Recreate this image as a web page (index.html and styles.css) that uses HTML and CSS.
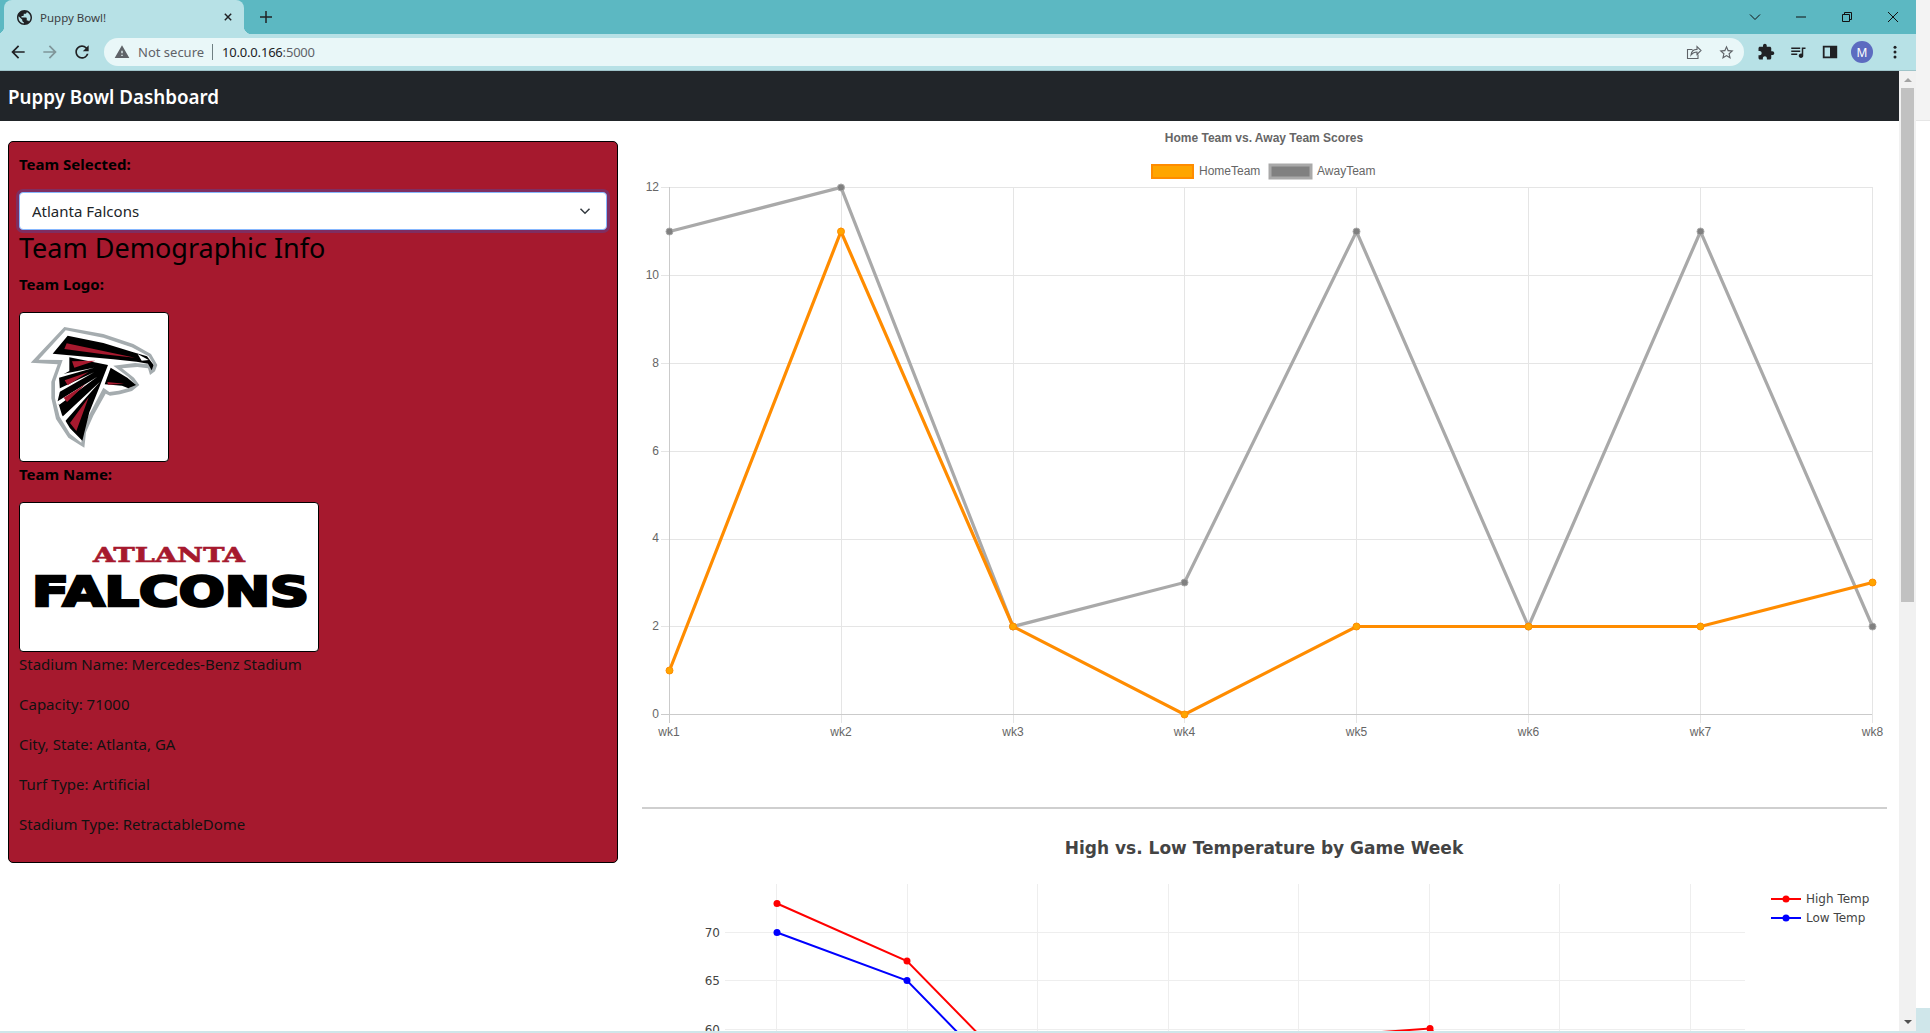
FILE: index.html
```html
<!DOCTYPE html>
<html lang="en">
<head>
    <meta charset="UTF-8">
    <title>Puppy Bowl!</title>
    <link rel="stylesheet" href="styles.css">
</head>
<body>
<div class="desktop">
    <div class="window">
        <!-- browser tabs -->
        <div class="tabstrip">
            <div class="tab">
                <svg class="favicon" viewBox="2 2 20 20"><path d="M12 2C6.48 2 2 6.48 2 12s4.48 10 10 10 10-4.48 10-10S17.52 2 12 2zm-1 17.93c-3.95-.49-7-3.85-7-7.93 0-.62.08-1.21.21-1.79L9 15v1c0 1.1.9 2 2 2v1.93zm6.9-2.54c-.26-.81-1-1.39-1.9-1.39h-1v-3c0-.55-.45-1-1-1H8v-2h2c.55 0 1-.45 1-1V7h2c1.1 0 2-.9 2-2v-.41c2.93 1.19 5 4.06 5 7.41 0 2.08-.8 3.97-2.1 5.39z"/></svg>
                <span class="tab-title">Puppy Bowl!</span>
                <svg class="tab-close" viewBox="0 0 10 10"><path d="M1 1l8 8M9 1l-8 8"/></svg>
            </div>
            <svg class="new-tab" viewBox="0 0 12 12"><path d="M6 0v12M0 6h12"/></svg>
            <div class="win-controls">
                <svg class="win-icon" viewBox="0 0 12 12"><path d="M1 3.5l5 5 5-5"/></svg>
                <svg class="win-icon" viewBox="0 0 12 12"><path d="M1 6h10"/></svg>
                <svg class="win-icon" viewBox="0 0 12 12"><path d="M1.5 3.5h7v7h-7zM3.5 3.5V1.5h7v7h-2"/></svg>
                <svg class="win-icon" viewBox="0 0 12 12"><path d="M1 1l10 10M11 1L1 11"/></svg>
            </div>
        </div>

        <!-- toolbar and address bar -->
        <div class="toolbar">
            <svg class="nav-icon" viewBox="0 0 24 24"><path d="M20 11H7.83l5.59-5.59L12 4l-8 8 8 8 1.41-1.41L7.83 13H20v-2z"/></svg>
            <svg class="nav-icon nav-disabled" viewBox="0 0 24 24"><path d="M4 11h12.17l-5.59-5.59L12 4l8 8-8 8-1.41-1.41L16.17 13H4v-2z"/></svg>
            <svg class="nav-icon" viewBox="0 0 24 24"><path d="M17.65 6.35A7.958 7.958 0 0 0 12 4c-4.42 0-7.99 3.58-7.99 8s3.57 8 7.99 8c3.73 0 6.84-2.55 7.73-6h-2.08A5.99 5.99 0 0 1 12 18c-3.31 0-6-2.69-6-6s2.69-6 6-6c1.66 0 3.14.69 4.22 1.78L13 11h7V4l-2.35 2.35z"/></svg>
            <div class="omnibox">
                <svg class="warn-icon" viewBox="0 0 24 24"><path d="M1 21h22L12 2 1 21zm12-3h-2v-2h2v2zm0-4h-2v-4h2v4z"/></svg>
                <span class="not-secure">Not secure</span>
                <span class="omni-sep"></span>
                <span class="url">10.0.0.166<span class="url-port">:5000</span></span>
                <svg class="share-icon" viewBox="0 0 16 16"><path d="M12 10.5v4H1.5V5.5h5M5 11c.4-3.5 2.8-5.6 6-5.6V2.5l4 4-4 4V8C8.7 8 6.5 9 5 11z"/></svg>
                <svg class="star-icon" viewBox="0 0 24 24"><path d="M22 9.24l-7.19-.62L12 2 9.19 8.63 2 9.24l5.46 4.73L5.82 21 12 17.27 18.18 21l-1.63-7.03L22 9.24zM12 15.4l-3.76 2.27 1-4.28-3.32-2.88 4.38-.38L12 6.1l1.71 4.04 4.38.38-3.32 2.88 1 4.28L12 15.4z"/></svg>
            </div>
            <div class="tool-icons">
                <svg class="tool-icon" viewBox="0 0 24 24"><path d="M20.5 11H19V7c0-1.1-.9-2-2-2h-4V3.5C13 2.12 11.88 1 10.5 1S8 2.12 8 3.5V5H4c-1.1 0-1.99.9-1.99 2v3.8H3.5c1.49 0 2.7 1.21 2.7 2.7s-1.21 2.7-2.7 2.7H2V20c0 1.1.9 2 2 2h3.8v-1.5c0-1.49 1.21-2.7 2.7-2.7 1.49 0 2.7 1.21 2.7 2.7V22H17c1.1 0 2-.9 2-2v-4h1.5c1.38 0 2.5-1.12 2.5-2.5S21.88 11 20.5 11z"/></svg>
                <svg class="tool-icon" viewBox="0 0 24 24"><path d="M15 6H3v2h12V6zm0 4H3v2h12v-2zM3 16h8v-2H3v2zM17 6v8.18c-.31-.11-.65-.18-1-.18-1.66 0-3 1.34-3 3s1.34 3 3 3 3-1.34 3-3V8h3V6h-5z"/></svg>
                <svg class="tool-icon" viewBox="0 0 20 20"><path fill-rule="evenodd" d="M2 3h16v14H2zM4 5v10h6V5z"/></svg>
                <span class="avatar">M</span>
                <svg class="tool-icon" viewBox="0 0 24 24"><circle cx="12" cy="5.5" r="2"/><circle cx="12" cy="12" r="2"/><circle cx="12" cy="18.5" r="2"/></svg>
            </div>
        </div>

        <div class="viewport">
            <div class="page">
                <nav class="navbar">Puppy Bowl Dashboard</nav>
                <div class="dashboard">
                    <div class="side-col">
                        <section class="team-panel">
                            <p class="label">Team Selected:</p>
                            <div class="select-wrap">
                                <select class="team-select">
                                    <option>Atlanta Falcons</option>
                                </select>
                                <svg class="select-arrow" viewBox="0 0 16 16"><path d="M2 5l6 6 6-6"/></svg>
                            </div>
                            <h3 class="panel-title">Team Demographic Info</h3>
                            <p class="label">Team Logo:</p>
                            <div class="logo-box logo-square">
                                <svg class="logo-svg" viewBox="0 -6 444 444">
                                    <path class="f-gray" d="M133 36L250 57 340 87 393 117 412 150 405 169 390 180 384 160 352 156 306 160 342 188 358 210 336 228 300 238 270 242 257 236 220 302 198 352 193 398 145 368 108 312 94 250 94 200 113 148 32 143z"/>
                                    <path class="f-white" d="M137 46L250 68 335 97 386 124 402 150 396 160 388 148 345 144 280 152 325 186 345 208 330 218 296 227 268 231 250 218 207 300 187 350 184 383 150 356 119 305 105 250 105 200 128 135 56 134z"/>
                                    <path class="f-black" d="M143 62L250 84 340 112 381 124 401 150 395 166 384 146 350 140 280 133 98 116z"/>
                                    <path class="f-red" d="M140 85L345 128 250 118 133 102z"/>
                                    <path class="f-white" d="M353 117L386 135 365 137z"/>
                                    <path class="f-black" d="M148 127L264 150 236 222 208 292 187 377 150 340 126 300 113 258 120 228 117 185 148 168z"/>
                                    <path class="f-white" d="M113 180L222 158 117 188zM110 224L222 172 117 232zM108 262L232 185 118 269zM124 308L240 200 134 320z"/>
                                    <path class="f-red" d="M156 139L226 137 163 158zM134 196L206 171 143 211zM131 248L197 207 141 261zM150 324L206 247 169 348z"/>
                                    <path class="f-black" d="M272 158L322 188 348 210 325 220 306 212 254 208z"/>
                                    <path class="f-red" d="M262 201L312 206 264 209z"/>
                                </svg>
                            </div>
                            <p class="label">Team Name:</p>
                            <div class="logo-box logo-wide">
                                <svg class="logo-svg" viewBox="0 0 298 148">
                                    <text class="word-atlanta" x="73" y="59" textLength="152" lengthAdjust="spacingAndGlyphs">ATLANTA</text>
                                    <text class="word-falcons" x="12" y="103" textLength="277" lengthAdjust="spacingAndGlyphs">FALCONS</text>
                                </svg>
                            </div>
                            <p class="info">Stadium Name: Mercedes-Benz Stadium</p>
                            <p class="info">Capacity: 71000</p>
                            <p class="info">City, State: Atlanta, GA</p>
                            <p class="info">Turf Type: Artificial</p>
                            <p class="info">Stadium Type: RetractableDome</p>
                        </section>
                    </div>

                    <div class="chart-col">
                        <!-- scores chart, viewBox uses the same numbers as the page -->
                        <svg class="chart chart-scores" viewBox="642 121 1245 680">
                            <text class="c1-title" x="1264" y="142">Home Team vs. Away Team Scores</text>
                            <rect class="swatch-home" x="1152" y="165" width="41" height="13"/>
                            <text class="c1-text" x="1199" y="175">HomeTeam</text>
                            <rect class="swatch-away" x="1270" y="165" width="41" height="13"/>
                            <text class="c1-text" x="1317" y="175">AwayTeam</text>

                            <path class="c1-grid" d="M661 187.5H1872M661 275.5H1872M661 363.5H1872M661 451.5H1872M661 539.5H1872M661 626.5H1872"/>
                            <path class="c1-grid" d="M841.5 187V723M1013.5 187V723M1184.5 187V723M1356.5 187V723M1528.5 187V723M1700.5 187V723M1872.5 187V723"/>
                            <path class="c1-axis" d="M669.5 187V723M661 714.5H1872"/>

                            <text class="c1-ytick" x="659" y="191">12</text>
                            <text class="c1-ytick" x="659" y="279">10</text>
                            <text class="c1-ytick" x="659" y="367">8</text>
                            <text class="c1-ytick" x="659" y="455">6</text>
                            <text class="c1-ytick" x="659" y="542">4</text>
                            <text class="c1-ytick" x="659" y="630">2</text>
                            <text class="c1-ytick" x="659" y="718">0</text>

                            <text class="c1-xtick" x="669" y="736">wk1</text>
                            <text class="c1-xtick" x="841" y="736">wk2</text>
                            <text class="c1-xtick" x="1013" y="736">wk3</text>
                            <text class="c1-xtick" x="1184.5" y="736">wk4</text>
                            <text class="c1-xtick" x="1356.5" y="736">wk5</text>
                            <text class="c1-xtick" x="1528.5" y="736">wk6</text>
                            <text class="c1-xtick" x="1700.5" y="736">wk7</text>
                            <text class="c1-xtick" x="1872.5" y="736">wk8</text>

                            <polyline class="line-away" points="669.5,231.5 841,187.5 1013,626.5 1184.5,582.5 1356.5,231.5 1528.5,626.5 1700.5,231.5 1872.5,626.5"/>
                            <g class="dots-away">
                                <circle cx="669.5" cy="231.5" r="3.5"/><circle cx="841" cy="187.5" r="3.5"/><circle cx="1013" cy="626.5" r="3.5"/><circle cx="1184.5" cy="582.5" r="3.5"/><circle cx="1356.5" cy="231.5" r="3.5"/><circle cx="1528.5" cy="626.5" r="3.5"/><circle cx="1700.5" cy="231.5" r="3.5"/><circle cx="1872.5" cy="626.5" r="3.5"/>
                            </g>
                            <polyline class="line-home" points="669.5,670.5 841,231.5 1013,626.5 1184.5,714.5 1356.5,626.5 1528.5,626.5 1700.5,626.5 1872.5,582.5"/>
                            <g class="dots-home">
                                <circle cx="669.5" cy="670.5" r="3.5"/><circle cx="841" cy="231.5" r="3.5"/><circle cx="1013" cy="626.5" r="3.5"/><circle cx="1184.5" cy="714.5" r="3.5"/><circle cx="1356.5" cy="626.5" r="3.5"/><circle cx="1528.5" cy="626.5" r="3.5"/><circle cx="1700.5" cy="626.5" r="3.5"/><circle cx="1872.5" cy="582.5" r="3.5"/>
                            </g>
                        </svg>

                        <hr class="chart-rule">

                        <!-- temperature chart, runs past the fold -->
                        <svg class="chart chart-temps" viewBox="642 809 1245 420">
                            <text class="c2-title" x="1264" y="854">High vs. Low Temperature by Game Week</text>
                            <path class="c2-grid" d="M776.5 884V1200M907.5 884V1200M1037.5 884V1200M1168.5 884V1200M1298.5 884V1200M1429.5 884V1200M1559.5 884V1200M1690.5 884V1200"/>
                            <path class="c2-grid" d="M725 932.5H1745M725 980.5H1745M725 1029.5H1745"/>
                            <text class="c2-ytick" x="720" y="937">70</text>
                            <text class="c2-ytick" x="720" y="985">65</text>
                            <text class="c2-ytick" x="720" y="1034">60</text>

                            <polyline class="line-high" points="777,903.5 907,961 1038,1095 1168,1100 1299,1038 1430,1028.5 1560,1150"/>
                            <g class="dots-high">
                                <circle cx="777" cy="903.5" r="3.5"/><circle cx="907" cy="961" r="3.5"/><circle cx="1430" cy="1028.5" r="3.5"/>
                            </g>
                            <polyline class="line-low" points="777,932.5 907,980.5 1038,1115 1168,1130 1299,1100 1430,1080"/>
                            <g class="dots-low">
                                <circle cx="777" cy="932.5" r="3.5"/><circle cx="907" cy="980.5" r="3.5"/>
                            </g>

                            <path class="line-high" d="M1771 899H1801"/>
                            <circle class="legend-high" cx="1786" cy="899" r="3.5"/>
                            <text class="c2-text" x="1806" y="903">High Temp</text>
                            <path class="line-low" d="M1771 918H1801"/>
                            <circle class="legend-low" cx="1786" cy="918" r="3.5"/>
                            <text class="c2-text" x="1806" y="922">Low Temp</text>
                        </svg>
                    </div>
                </div>
            </div>

            <div class="scrollbar">
                <span class="scroll-up"></span>
                <span class="scroll-thumb"></span>
                <span class="scroll-down"></span>
            </div>
        </div>
    </div>

    <div class="edge">
        <div class="edge-top"></div>
        <div class="edge-mid"></div>
        <div class="edge-bottom"></div>
    </div>
</div>
<div class="taskbar-line"></div>
</body>
</html>
```

FILE: styles.css
```css
html, body {
    margin: 0;
    padding: 0;
    height: 100%;
    overflow: hidden;
    background: #fff;
    font-family: "Noto Sans", "Open Sans", sans-serif;
}
.desktop {
    display: flex;
    height: 1031px;
}
.window {
    width: 1916px;
    display: flex;
    flex-direction: column;
}
.edge {
    flex: 1;
    display: flex;
    flex-direction: column;
}
.edge-top {
    height: 120px;
    background: #f3f3f3;
    border-bottom: 1px solid #e6e6e6;
}
.edge-mid {
    flex: 1;
    background: #fff;
}
.edge-bottom {
    height: 23px;
    background: #cfe6ea;
}
.taskbar-line {
    height: 2px;
    background: #cfe6ea;
}

/* tab strip */
.tabstrip {
    height: 34px;
    flex: none;
    background: #5cb8c2;
    display: flex;
    align-items: flex-end;
}
.tab {
    position: relative;
    width: 240px;
    height: 34px;
    margin-left: 4px;
    box-sizing: border-box;
    padding: 0 12px 0 13px;
    background: #b7e1e6;
    border-radius: 8px 8px 0 0;
    display: flex;
    align-items: center;
}
.tab::before, .tab::after {
    content: "";
    position: absolute;
    bottom: 0;
    width: 8px;
    height: 8px;
}
.tab::before {
    left: -8px;
    background: radial-gradient(circle at 0 0, transparent 8px, #b7e1e6 8.5px);
}
.tab::after {
    right: -8px;
    background: radial-gradient(circle at 100% 0, transparent 8px, #b7e1e6 8.5px);
}
.favicon {
    width: 15px;
    height: 15px;
    fill: #202124;
    flex: none;
}
.tab-title {
    margin-left: 8px;
    flex: 1;
    font-size: 11.5px;
    color: #3c4043;
}
.tab-close {
    width: 8px;
    height: 8px;
    fill: none;
    stroke: #202124;
    stroke-width: 1.8;
}
.new-tab {
    width: 12px;
    height: 12px;
    margin: 0 0 11px 16px;
    fill: none;
    stroke: #202124;
    stroke-width: 1.5;
}
.win-controls {
    margin-left: auto;
    align-self: stretch;
    display: flex;
    align-items: center;
    gap: 34px;
    padding-right: 17px;
}
.win-icon {
    width: 12px;
    height: 12px;
    fill: none;
    stroke: #111;
    stroke-width: 1;
}

/* toolbar */
.toolbar {
    height: 36px;
    flex: none;
    background: #b7e1e6;
    border-bottom: 1px solid #9fc4c9;
    display: flex;
    align-items: center;
    padding-left: 8px;
}
.nav-icon {
    width: 20px;
    height: 20px;
    flex: none;
    fill: #202124;
    margin-right: 12px;
}
.nav-disabled {
    fill: #7f9599;
}
.omnibox {
    width: 1640px;
    height: 28px;
    border-radius: 14px;
    background: #e9f7f8;
    display: flex;
    align-items: center;
    padding: 0 9px 0 10px;
    box-sizing: border-box;
    flex: none;
}
.warn-icon {
    width: 16px;
    height: 16px;
    fill: #5f6368;
    flex: none;
}
.not-secure {
    margin-left: 8px;
    font-size: 13px;
    color: #5f6368;
}
.omni-sep {
    width: 1px;
    height: 16px;
    background: #6f7f82;
    margin: 0 9px 0 8px;
}
.url {
    font-size: 13px;
    letter-spacing: -.2px;
    color: #202124;
}
.url-port {
    color: #5f6368;
}
.share-icon {
    width: 16px;
    height: 16px;
    margin-left: auto;
    fill: none;
    stroke: #5f6368;
    stroke-width: 1.1;
}
.star-icon {
    width: 17px;
    height: 17px;
    margin-left: 16px;
    fill: #5f6368;
}
.tool-icons {
    flex: 1;
    display: flex;
    align-items: center;
    gap: 14px;
    padding-left: 13px;
}
.tool-icon {
    width: 18px;
    height: 18px;
    fill: #202124;
    flex: none;
}
.avatar {
    width: 22px;
    height: 22px;
    margin: 0 -1px 0 -2px;
    border-radius: 50%;
    background: #5c6bc0;
    color: #fff;
    font-size: 12px;
    display: flex;
    align-items: center;
    justify-content: center;
    flex: none;
}

/* page area */
.viewport {
    flex: 1;
    min-height: 0;
    display: flex;
}
.page {
    flex: 1;
    min-width: 0;
    overflow: hidden;
}
.scrollbar {
    width: 17px;
    flex: none;
    background: #f1f1f1;
    display: flex;
    flex-direction: column;
    align-items: center;
}
.scroll-up {
    margin-top: 7px;
    border-left: 4px solid transparent;
    border-right: 4px solid transparent;
    border-bottom: 4px solid #a3a3a3;
}
.scroll-thumb {
    width: 13px;
    height: 514px;
    margin-top: 6px;
    background: #c1c1c1;
}
.scroll-down {
    margin-top: auto;
    margin-bottom: 7px;
    border-left: 4px solid transparent;
    border-right: 4px solid transparent;
    border-top: 4px solid #505050;
}
.navbar {
    height: 50px;
    background: #212529;
    color: #fff;
    font-size: 18.8px;
    font-weight: 600;
    line-height: 52px;
    padding-left: 8px;
}
.dashboard {
    display: flex;
}
.side-col {
    width: 633px;
    flex: none;
    box-sizing: border-box;
    padding: 20px 15px 0 8px;
}
.team-panel {
    box-sizing: border-box;
    height: 722px;
    padding: 10px;
    background: #a6192e;
    border: 1px solid #000;
    border-radius: 5px;
    color: #111;
    font-size: 15px;
    line-height: 24px;
}
.label {
    margin: 0 0 16px;
    font-weight: 700;
    color: #000;
}
.select-wrap {
    position: relative;
    height: 38px;
}
.team-select {
    width: 100%;
    height: 38px;
    padding: 0 12px;
    appearance: none;
    background: #fff;
    border: 1px solid #86b7fe;
    border-radius: 4px;
    box-shadow: 0 0 0 3px rgba(13, 110, 253, .25);
    font-family: inherit;
    font-size: 15px;
    color: #212529;
}
.select-arrow {
    position: absolute;
    right: 16px;
    top: 13px;
    width: 12px;
    height: 12px;
    fill: none;
    stroke: #343a40;
    stroke-width: 2;
}
.panel-title {
    margin: 0 0 7px;
    padding-top: 1px;
    font-size: 27px;
    font-weight: 400;
    line-height: 34px;
    color: #000;
}
.logo-box {
    box-sizing: border-box;
    height: 150px;
    background: #fff;
    border: 1px solid #000;
    border-radius: 4px;
}
.logo-square {
    width: 150px;
}
.logo-wide {
    width: 300px;
}
.logo-svg {
    display: block;
    width: 100%;
    height: 100%;
}
.f-gray { fill: #a5acaf; }
.f-white { fill: #fff; }
.f-black { fill: #000; }
.f-red { fill: #a6192e; }
.word-atlanta {
    font-family: "DejaVu Serif", serif;
    font-weight: 700;
    font-size: 20px;
    fill: #a6192e;
    stroke: #a6192e;
    stroke-width: .6;
}
.word-falcons {
    font-family: "DejaVu Sans", sans-serif;
    font-weight: 700;
    font-size: 40px;
    fill: #000;
    stroke: #000;
    stroke-width: 2.5;
    stroke-linejoin: miter;
}
.info {
    margin: 0 0 16px;
}

/* charts */
.chart-col {
    flex: 1;
    min-width: 0;
    padding: 0 12px 0 9px;
}
.chart {
    display: block;
    width: 1245px;
}
.chart-scores {
    height: 680px;
}
.chart-temps {
    height: 420px;
}
.chart-rule {
    margin: 6px 0 0;
    border: 0;
    height: 2px;
    background: #cfcfcf;
}
.c1-title {
    font: bold 12px "Liberation Sans", Arial, sans-serif;
    fill: #666;
    text-anchor: middle;
}
.c1-text, .c1-ytick, .c1-xtick {
    font: 12px "Liberation Sans", Arial, sans-serif;
    fill: #666;
}
.c1-ytick { text-anchor: end; }
.c1-xtick { text-anchor: middle; }
.swatch-home {
    fill: #ffa500;
    stroke: #ff8c00;
    stroke-width: 2;
}
.swatch-away {
    fill: #808080;
    stroke: #a9a9a9;
    stroke-width: 3;
}
.c1-grid {
    fill: none;
    stroke: #e5e5e5;
    stroke-width: 1;
}
.c1-axis {
    fill: none;
    stroke: #cbcbcb;
    stroke-width: 1;
}
.line-home {
    fill: none;
    stroke: #ff8c00;
    stroke-width: 3.2;
}
.line-away {
    fill: none;
    stroke: #a9a9a9;
    stroke-width: 3.2;
}
.dots-home { fill: #ffa500; stroke: #ff8c00; }
.dots-away { fill: #808080; stroke: #a9a9a9; }
.c2-title {
    font: bold 17px "DejaVu Sans", Verdana, sans-serif;
    fill: #444;
    text-anchor: middle;
}
.c2-text, .c2-ytick {
    font: 12px "DejaVu Sans", Verdana, sans-serif;
    fill: #444;
}
.c2-ytick { text-anchor: end; }
.c2-grid {
    fill: none;
    stroke: #eee;
    stroke-width: 1;
}
.line-high {
    fill: none;
    stroke: #f00;
    stroke-width: 2;
}
.line-low {
    fill: none;
    stroke: #00f;
    stroke-width: 2;
}
.dots-high, .legend-high { fill: #f00; }
.dots-low, .legend-low { fill: #00f; }
```
